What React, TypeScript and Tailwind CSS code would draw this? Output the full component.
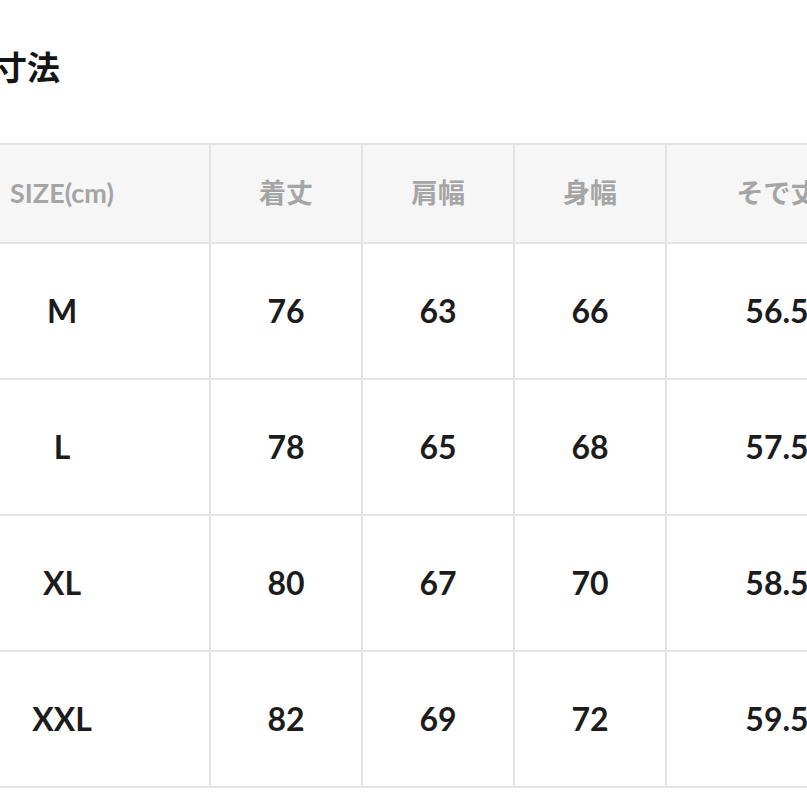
const HEAD = ["SIZE(cm)", "着丈", "肩幅", "身幅", "そで丈"];

const ROWS = [
  ["M", "76", "63", "66", "56.5"],
  ["L", "78", "65", "68", "57.5"],
  ["XL", "80", "67", "70", "58.5"],
  ["XXL", "82", "69", "72", "59.5"],
];

const COLS = "grid-cols-[296px_152px_152px_152px_222px]";

export default function App() {
  return (
    <div
      className="w-[807px] h-[807px] overflow-hidden bg-white"
      style={{ fontFamily: "Lato, 'Noto Sans CJK JP', sans-serif" }}
    >
      <div className="pt-[47px] -ml-[6px]">
        <h2 className="text-[33px] font-bold leading-[40px] text-[#151515]">寸法</h2>
      </div>

      <div className={`mt-[56px] -ml-[87px] w-[980px] grid ${COLS} border-t-2 border-l-2 border-[#e4e4e4]`}>
        {HEAD.map((h) => (
          <div
            key={h}
            className="h-[99px] flex items-center justify-center bg-[#f6f6f6] border-r-2 border-b-2 border-[#e4e4e4] text-[27px] font-bold text-[#a5a5a5]"
          >
            {h}
          </div>
        ))}
        {ROWS.map((row) =>
          row.map((cell, i) => (
            <div
              key={row[0] + i}
              className="h-[136px] flex items-center justify-center border-r-2 border-b-2 border-[#e4e4e4] text-[32px] font-bold text-[#1c1c1c]"
            >
              {cell}
            </div>
          ))
        )}
      </div>
    </div>
  );
}
